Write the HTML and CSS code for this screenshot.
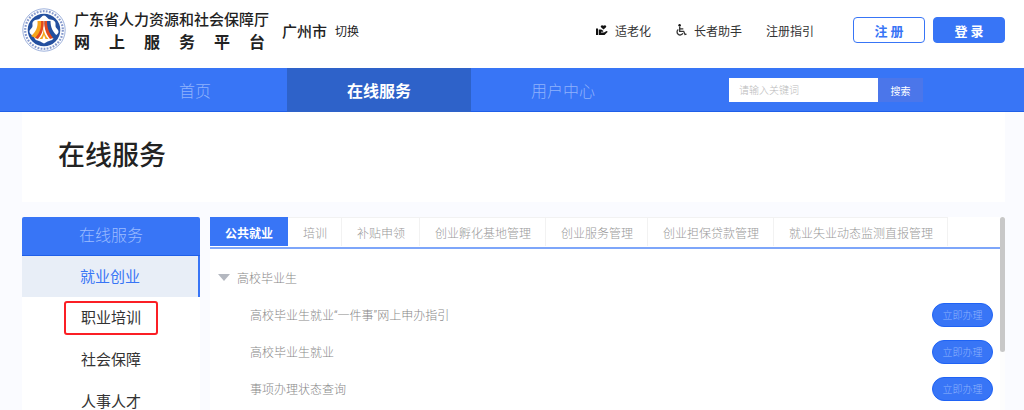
FILE: index.html
```
<!DOCTYPE html>
<html lang="zh-CN">
<head>
    <meta charset="UTF-8">
    <meta name="viewport" content="width=device-width, initial-scale=1.0">
    <title>广东省人力资源和社会保障厅网上服务平台</title>
    <link rel="stylesheet" href="styles.css">
</head>
<body>
    <header class="header">
        <svg class="logo" viewBox="0 0 44 44" aria-hidden="true">
            <circle cx="22" cy="22" r="21.2" fill="#fff" stroke="#9db1dc" stroke-width="1"/>
            <circle cx="22" cy="22" r="18.8" fill="none" stroke="#8599cc" stroke-width="2.2" stroke-dasharray="1.800 1.300"/>
            <circle cx="22" cy="22" r="16.3" fill="#24509f"/>
            <path d="M22 7.500c2.500 0 3 3.500 6.500 4s5.500 2 5 5.500 3.500 4 3 7-4 3-5 6-4 2-9.500 5.500c-5.500-3.500-8.500-2.500-9.500-5.500s-4.500-3-5-6 3.500-3.500 3-7 1.500-5 5-5.500 4-4 6.500-4z" fill="#fff"/>
            <path d="M15.500 13h6c.5 7-2 13-8 17l-4.500-2c5-4 7-9 6.500-15z" fill="#f6a51c"/>
            <path d="M19 13h2.500c.5 7-1 13-5.500 18l-3-1c5-5 6.500-10 6-17z" fill="#e2481d"/>
            <path d="M22.500 13h6c0 6 2 11 7 15L31 30.500c-6-4-9-10-8.500-17.500z" fill="#24509f"/>
            <path d="M22.500 13h2.500c0 7 2 12 6 17l-3 1c-4-5-6-11-5.500-18z" fill="#e2481d"/>
            <path d="M21.500 20c0 5-1 8-4 11h3l1.500-4 1.500 4h3c-3-3-4.500-6-5-11z" fill="#f6a51c"/>
        </svg>
        <div class="site-name">
            <div class="site-org">广东省人力资源和社会保障厅</div>
            <div class="site-platform">网上服务平台</div>
        </div>
        <span class="city">广州市</span>
        <a class="city-switch" href="#">切换</a>

        <nav class="tools">
            <a href="#">
                <svg class="tool-icon" viewBox="0 0 12 12" aria-hidden="true">
                    <path d="M0 4.500h2V11H0zM2.700 5.500h2.500l2 1.300v1H5v.7h3L10.500 7l1.300.7L8.500 11H2.700z"/>
                    <path d="M7.500 5.500 5 3.200C4 1.800 6 .3 7.500 1.800 9 .3 11 1.800 10 3.200z"/>
                </svg>
                适老化
            </a>
            <a href="#">
                <svg class="tool-icon" viewBox="0 0 12 12" aria-hidden="true">
                    <circle cx="4.600" cy="1.300" r="1.200"/>
                    <path d="M4.700 2.500v4.800h4l1.300 3.200 1.500-.4M5 4.800h3.300M3.300 5.400a3.100 3.100 0 1 0 4.600 3.900" fill="none" stroke="currentColor" stroke-width="1.300"/>
                </svg>
                长者助手
            </a>
            <a href="#">注册指引</a>
        </nav>
        <button class="btn btn-outline" type="button">注 册</button>
        <button class="btn btn-primary" type="button">登 录</button>
    </header>

    <nav class="navbar">
        <a class="nav-item" href="#">首页</a>
        <a class="nav-item active" href="#">在线服务</a>
        <a class="nav-item" href="#">用户中心</a>
        <form class="search">
            <input type="text" placeholder="请输入关键词" aria-label="请输入关键词">
            <button type="button">搜索</button>
        </form>
    </nav>

    <div class="page">
        <div class="page-title">
            <h1>在线服务</h1>
        </div>

        <div class="columns">
            <aside class="sidebar">
                <h2>在线服务</h2>
                <a class="side-item active" href="#">就业创业</a>
                <a class="side-item" href="#"><span class="marked">职业培训</span></a>
                <a class="side-item" href="#">社会保障</a>
                <a class="side-item" href="#">人事人才</a>
            </aside>

            <main class="content">
                <div class="tabs">
                    <button class="tab active" type="button">公共就业</button>
                    <button class="tab" type="button">培训</button>
                    <button class="tab" type="button">补贴申领</button>
                    <button class="tab" type="button">创业孵化基地管理</button>
                    <button class="tab" type="button">创业服务管理</button>
                    <button class="tab" type="button">创业担保贷款管理</button>
                    <button class="tab" type="button">就业失业动态监测直报管理</button>
                </div>
                <div class="group">
                    <h3><span class="arrow"></span>高校毕业生</h3>
                    <ul>
                        <li>高校毕业生就业“一件事”网上申办指引<button class="apply" type="button">立即办理</button></li>
                        <li>高校毕业生就业<button class="apply" type="button">立即办理</button></li>
                        <li>事项办理状态查询<button class="apply" type="button">立即办理</button></li>
                    </ul>
                </div>
            </main>
            <div class="scrollbar"><div class="scroll-thumb"></div></div>
        </div>
    </div>
</body>
</html>
```

FILE: styles.css
```
* {
    box-sizing: border-box;
}
body {
    margin: 0;
    height: 100vh;
    overflow: hidden;
    background: #fafbff;
    color: #222;
    font-family: Roboto, "Noto Sans CJK SC", sans-serif;
    font-size: 12px;
}
a {
    color: inherit;
    text-decoration: none;
}
button, input {
    font-family: inherit;
    margin: 0;
    padding: 0;
}
button {
    cursor: pointer;
}
h1, h2, h3, ul {
    margin: 0;
    padding: 0;
}

/* header */
.header {
    display: flex;
    align-items: center;
    height: 68px;
    padding: 0 19px 8px 22px;
    background: #fff;
    white-space: nowrap;
}
.logo {
    width: 44px;
    height: 44px;
    margin-right: 8px;
}
.site-name {
    width: 195px;
    margin-right: 13px;
    padding-top: 4px;
}
.site-org {
    font-size: 15px;
    line-height: 22px;
    font-weight: 500;
}
.site-platform {
    font-size: 16px;
    line-height: 24px;
    font-weight: 700;
    letter-spacing: 19px;
    width: 210px;
}
.city {
    font-size: 15px;
    font-weight: 500;
    margin-right: 8px;
}
.tools {
    display: flex;
    gap: 24px;
    margin-left: auto;
    margin-right: 39px;
    color: #333;
}
.tools a {
    display: flex;
    align-items: center;
}
.tool-icon {
    width: 12px;
    height: 12px;
    margin-right: 7px;
    fill: #111;
}
.btn {
    width: 72px;
    height: 26px;
    border: 1px solid #3875f6;
    border-radius: 4px;
    font-size: 13px;
    font-weight: 700;
}
.btn-outline {
    background: #fff;
    color: #3875f6;
    margin-right: 8px;
}
.btn-primary {
    background: #3875f6;
    color: #fff;
}

/* navigation bar */
.navbar {
    display: flex;
    align-items: center;
    height: 44px;
    padding-left: 103px;
    background: #3875f6;
    box-shadow: inset 0 -1px #1f5fe8;
}
.nav-item {
    width: 184px;
    height: 44px;
    line-height: 48px;
    text-align: center;
    font-size: 16px;
    font-weight: 300;
    color: #8fb2fc;
}
.nav-item.active {
    background: #2e62c9;
    color: #fff;
    font-weight: 700;
}
.search {
    display: flex;
    margin-left: auto;
    margin-right: 101px;
}
.search input {
    width: 149px;
    height: 24px;
    padding: 0 10px;
    border: 0;
    font-size: 10px;
    font-weight: 300;
}
.search input::placeholder {
    color: #bbb;
}
.search button {
    width: 45px;
    border: 0;
    background: #4b76ea;
    color: #fff;
    font-size: 10px;
}

/* page */
.page {
    padding: 0 19px 0 22px;
}
.page-title {
    height: 90px;
    padding: 24px 36px;
    margin-bottom: 15px;
    background: #fff;
}
.page-title h1 {
    font-size: 27px;
    line-height: 40px;
    font-weight: 500;
}
.columns {
    display: flex;
}

/* sidebar */
.sidebar {
    width: 178px;
    margin-right: 10px;
    background: #fff;
    text-align: center;
}
.sidebar h2 {
    border-bottom: 1px solid #1f5fe8;
    border-radius: 2px 2px 0 0;
    background: #3875f6;
    color: #9cbcff;
    font-size: 16px;
    line-height: 38px;
    font-weight: 300;
}
.side-item {
    display: flex;
    align-items: center;
    justify-content: center;
    height: 42px;
    font-size: 15px;
    line-height: 20px;
    color: #333;
}
.side-item.active {
    height: 41px;
    background: #e8eef7;
    border-right: 2px solid #3875f6;
    color: #3875f6;
}
.marked {
    padding: 0 15px;
    border: 2px solid #fb1f25;
    border-radius: 3px;
    line-height: 30px;
}

/* content */
.content {
    flex: 1;
    background: #fff;
}
.tabs {
    display: flex;
    padding-bottom: 1px;
    border-bottom: 2px solid #7ea6fa;
}
.tab {
    height: 29px;
    padding: 0 14px 0 15px;
    border: solid #f2f2f2;
    border-width: 1px 1px 0 0;
    background: #fff;
    color: #999;
    font-size: 12px;
    font-weight: 300;
    white-space: nowrap;
}
.tab.active {
    border-color: #3875f6;
    background: #3875f6;
    color: #fff;
    font-weight: 700;
}
.group {
    padding: 10px 7px 20px 8px;
    color: #888;
}
.group h3 {
    display: flex;
    align-items: center;
    height: 37px;
    font-size: 12px;
    font-weight: 300;
}
.arrow {
    margin-right: 7px;
    border: solid transparent;
    border-width: 7px 6px 0;
    border-top-color: #b4b8c0;
}
.group ul {
    list-style: none;
    padding-left: 32px;
}
.group li {
    display: flex;
    align-items: center;
    justify-content: space-between;
    height: 37px;
    font-weight: 300;
}
.apply {
    width: 61px;
    height: 24px;
    border: 1px solid #1f63f5;
    border-radius: 12px;
    background: #3875f6;
    color: #8fb2fc;
    font-size: 10px;
    font-weight: 300;
}
.scrollbar {
    width: 5px;
    background: #fdfdfd;
}
.scroll-thumb {
    height: 135px;
    border-radius: 3px;
    background: #c8c8c8;
}
```
